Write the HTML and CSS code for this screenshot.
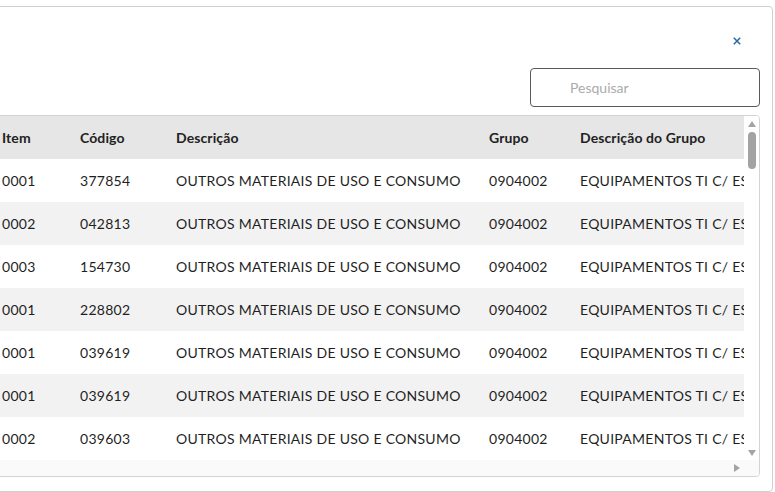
FILE: index.html
```html
<!DOCTYPE html>
<html lang="pt-BR">
<head>
<meta charset="utf-8">
<title>Itens</title>
<link rel="stylesheet" href="styles.css">
</head>
<body>
<div class="page">
  <div class="card">
    <div class="card-head">
      <button class="close" type="button" aria-label="Fechar">
        <svg width="8" height="8" viewBox="0 0 8 8"><path d="M0.8 0.8 L7.2 7.2 M7.2 0.8 L0.8 7.2" stroke="#2d6aa8" stroke-width="1.6" fill="none"/></svg>
      </button>
    </div>
    <div class="search-row">
      <input class="search" type="text" placeholder="Pesquisar">
    </div>
    <div class="table-box">
      <div class="table-view">
        <div class="grid">
          <div class="row head"><div>Item</div><div>Código</div><div>Descrição</div><div>Grupo</div><div>Descrição do Grupo</div></div>
          <div class="row"><div>0001</div><div>377854</div><div>OUTROS MATERIAIS DE USO E CONSUMO</div><div>0904002</div><div>EQUIPAMENTOS TI C/ ESTOQUE</div></div>
          <div class="row alt"><div>0002</div><div>042813</div><div>OUTROS MATERIAIS DE USO E CONSUMO</div><div>0904002</div><div>EQUIPAMENTOS TI C/ ESTOQUE</div></div>
          <div class="row"><div>0003</div><div>154730</div><div>OUTROS MATERIAIS DE USO E CONSUMO</div><div>0904002</div><div>EQUIPAMENTOS TI C/ ESTOQUE</div></div>
          <div class="row alt"><div>0001</div><div>228802</div><div>OUTROS MATERIAIS DE USO E CONSUMO</div><div>0904002</div><div>EQUIPAMENTOS TI C/ ESTOQUE</div></div>
          <div class="row"><div>0001</div><div>039619</div><div>OUTROS MATERIAIS DE USO E CONSUMO</div><div>0904002</div><div>EQUIPAMENTOS TI C/ ESTOQUE</div></div>
          <div class="row alt"><div>0001</div><div>039619</div><div>OUTROS MATERIAIS DE USO E CONSUMO</div><div>0904002</div><div>EQUIPAMENTOS TI C/ ESTOQUE</div></div>
          <div class="row"><div>0002</div><div>039603</div><div>OUTROS MATERIAIS DE USO E CONSUMO</div><div>0904002</div><div>EQUIPAMENTOS TI C/ ESTOQUE</div></div>
        </div>
      </div>
      <div class="vbar">
        <span class="arrow up"></span>
        <span class="thumb"></span>
        <span class="fill"></span>
        <span class="arrow down"></span>
      </div>
      <div class="hbar">
        <span class="fill"></span>
        <span class="arrow right"></span>
      </div>
      <div class="corner"></div>
    </div>
  </div>
</div>
</body>
</html>
```
FILE: styles.css
```css
* { box-sizing: border-box; }
html, body { margin: 0; padding: 0; background: #fff; }
body {
  font-family: "Lato", "Noto Sans", sans-serif;
  color: #1f1f1f;
  overflow: hidden;
}
.page {
  width: 775px;
  height: 492px;
  overflow: hidden;
  display: flex;
  justify-content: flex-end;
  align-items: flex-start;
  padding: 6px 2px 0 0;
}
.card {
  flex: 0 0 800px;
  height: 486px;
  border: 1px solid #cfcfcf;
  border-radius: 4px;
  background: #fff;
  padding: 0 12px 0 12px;
  display: flex;
  flex-direction: column;
}
.card-head {
  height: 61px;
  display: flex;
  justify-content: flex-end;
  align-items: flex-start;
}
.close {
  width: 20px;
  height: 20px;
  margin: 24px 13px 0 0;
  padding: 0;
  border: 0;
  background: transparent;
  display: flex;
  align-items: center;
  justify-content: center;
  cursor: pointer;
}
.search-row {
  display: flex;
  justify-content: flex-end;
  margin-bottom: 8px;
}
.search {
  width: 230px;
  height: 39px;
  border: 1px solid #5a5a5a;
  border-radius: 4px;
  padding: 0 0 0 39px;
  font-family: "Lato", sans-serif;
  font-size: 14px;
  color: #333;
  outline: none;
}
.search::placeholder { color: #ababab; }
.table-box {
  height: 362px;
  flex: 0 0 362px;
  border: 1px solid #d3d3d3;
  border-radius: 4px;
  display: grid;
  grid-template-columns: 1fr 15px;
  grid-template-rows: 344px 16px;
  overflow: hidden;
}
.table-view {
  overflow: hidden;
  background: #fff;
}
.grid {
  width: 900px;
}
.row {
  display: grid;
  grid-template-columns: 93px 96px 313px 91px 300px;
  height: 43px;
  align-items: center;
  font-size: 14px;
  letter-spacing: 0.27px;
  white-space: nowrap;
  background: #fff;
}
.row > div:first-child { padding-left: 15px; }
.row.alt { background: #f2f2f2; }
.row.head {
  background: #e6e6e6;
  font-weight: 700;
  letter-spacing: 0.1px;
  color: #222;
}
.vbar {
  display: flex;
  flex-direction: column;
  align-items: center;
  background: #fff;
  padding: 5px 0 4px;
}
.vbar .fill, .hbar .fill { flex: 1; }
.arrow { width: 0; height: 0; display: block; }
.arrow.up {
  border-left: 4px solid transparent;
  border-right: 4px solid transparent;
  border-bottom: 6px solid #a3a3a3;
}
.arrow.down {
  border-left: 4px solid transparent;
  border-right: 4px solid transparent;
  border-top: 6px solid #a3a3a3;
}
.thumb {
  display: block;
  width: 8px;
  height: 37px;
  border-radius: 4px;
  background: #a3a3a3;
  margin-top: 5px;
}
.hbar {
  display: flex;
  align-items: center;
  background: #fafafa;
  padding-right: 4px;
}
.arrow.right {
  border-top: 4px solid transparent;
  border-bottom: 4px solid transparent;
  border-left: 6px solid #a3a3a3;
}
.corner { background: #fafafa; }
```
